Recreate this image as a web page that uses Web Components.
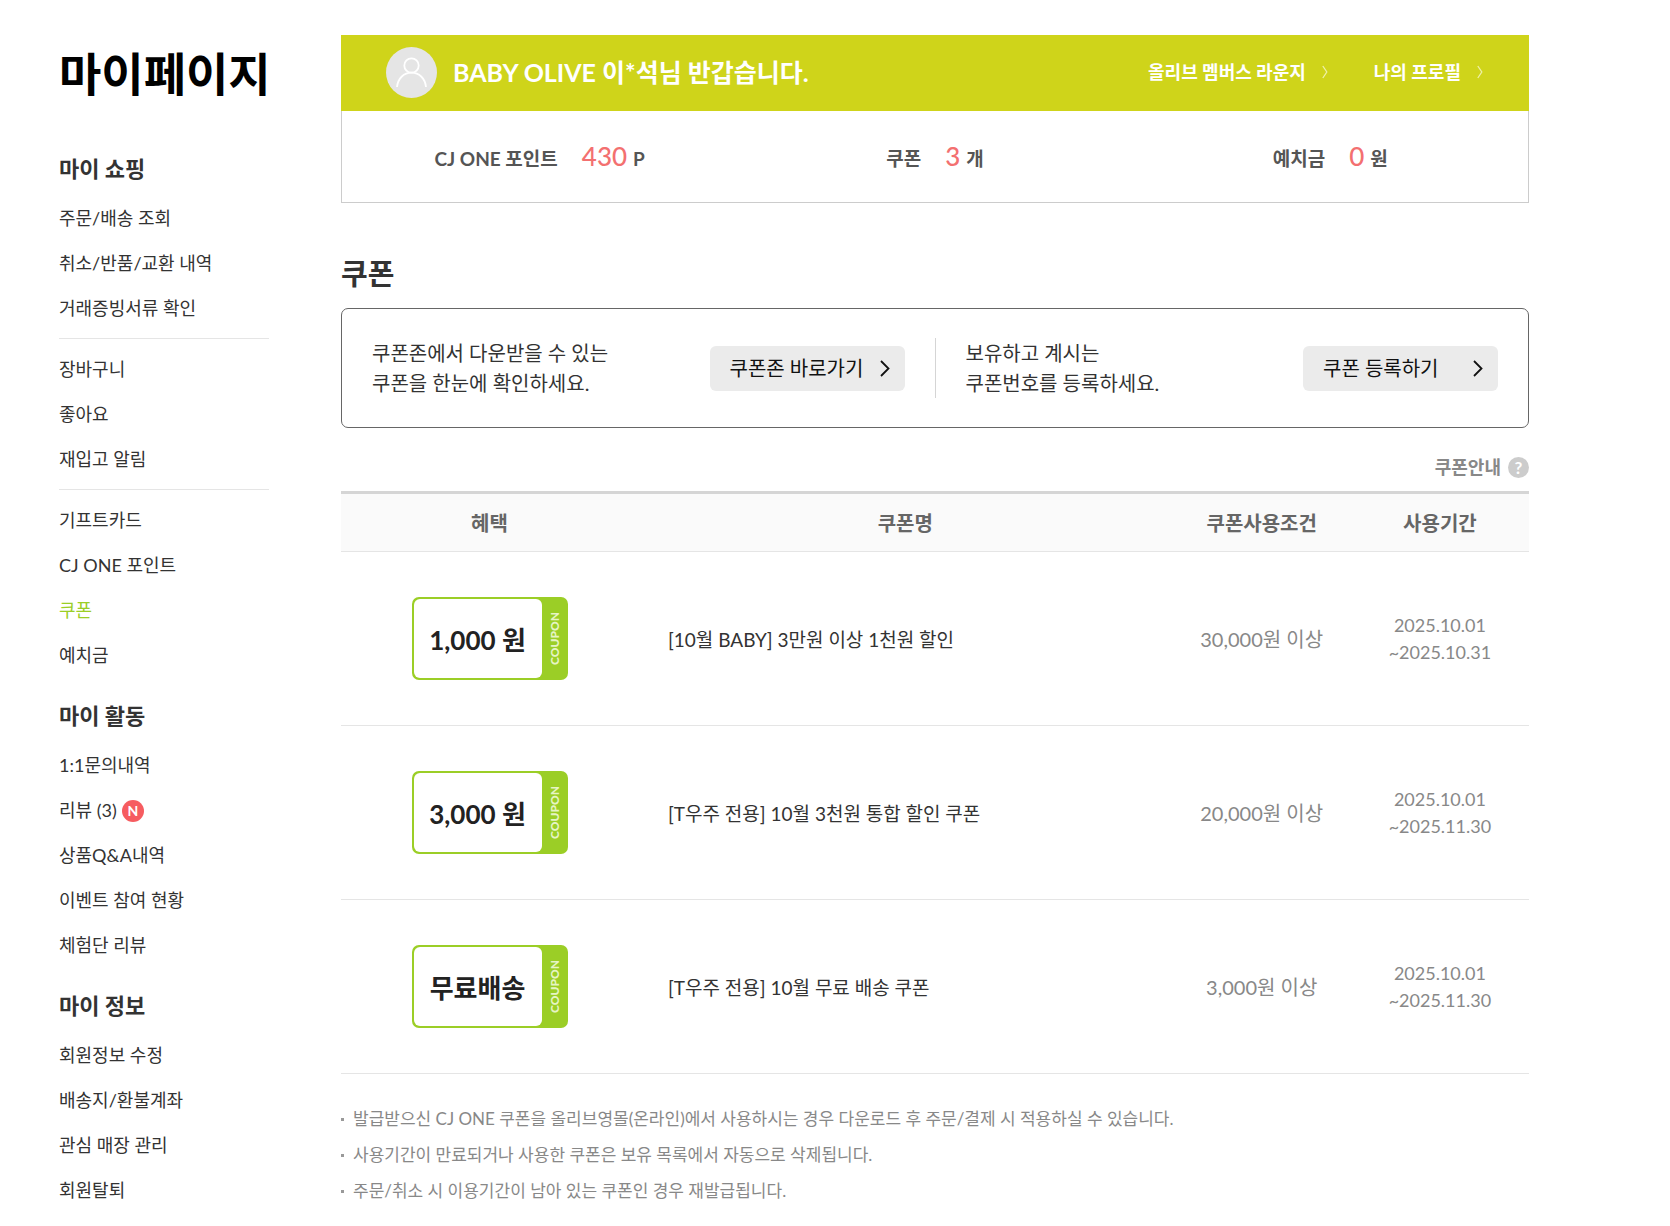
<!DOCTYPE html>
<html lang="ko">
<head>
<meta charset="utf-8">
<title>마이페이지 - 쿠폰</title>
<style>
  body {
    margin: 0;
    background: #fff;
    color: #333;
    font-family: Lato, "Noto Sans CJK KR", sans-serif;
    font-size: 18px;
  }
</style>
</head>
<body>
<my-page>
  <my-menu slot="menu">
    <menu-group heading="마이 쇼핑">
      <menu-list>
        <menu-item>주문/배송 조회</menu-item>
        <menu-item>취소/반품/교환 내역</menu-item>
        <menu-item>거래증빙서류 확인</menu-item>
      </menu-list>
      <menu-list>
        <menu-item>장바구니</menu-item>
        <menu-item>좋아요</menu-item>
        <menu-item>재입고 알림</menu-item>
      </menu-list>
      <menu-list>
        <menu-item>기프트카드</menu-item>
        <menu-item>CJ ONE 포인트</menu-item>
        <menu-item active>쿠폰</menu-item>
        <menu-item>예치금</menu-item>
      </menu-list>
    </menu-group>
    <menu-group heading="마이 활동">
      <menu-list>
        <menu-item>1:1문의내역</menu-item>
        <menu-item badge="N">리뷰 (3)</menu-item>
        <menu-item>상품Q&amp;A내역</menu-item>
        <menu-item>이벤트 참여 현황</menu-item>
        <menu-item>체험단 리뷰</menu-item>
      </menu-list>
    </menu-group>
    <menu-group heading="마이 정보">
      <menu-list>
        <menu-item>회원정보 수정</menu-item>
        <menu-item>배송지/환불계좌</menu-item>
        <menu-item>관심 매장 관리</menu-item>
        <menu-item>회원탈퇴</menu-item>
      </menu-list>
    </menu-group>
  </my-menu>

  <member-banner>
    BABY OLIVE 이*석님 반갑습니다.
    <member-point slot="points" label="CJ ONE 포인트" value="430" unit="P"></member-point>
    <member-point slot="points" label="쿠폰" value="3" unit="개"></member-point>
    <member-point slot="points" label="예치금" value="0" unit="원"></member-point>
  </member-banner>

  <coupon-section heading="쿠폰">
    <coupon-guide slot="guide" button="쿠폰존 바로가기">쿠폰존에서 다운받을 수 있는<br>쿠폰을 한눈에 확인하세요.</coupon-guide>
    <coupon-guide slot="guide" button="쿠폰 등록하기">보유하고 계시는<br>쿠폰번호를 등록하세요.</coupon-guide>
    <coupon-table></coupon-table>
    <notice-list></notice-list>
  </coupon-section>
</my-page>

<script>
// small helper: every element clones its own template into an open shadow root
function define(name, html, setup) {
  const template = document.createElement('template');
  template.innerHTML = html;

  window.customElements.define(name, class extends HTMLElement {
    constructor() {
      super();
      this.attachShadow({ mode: 'open' }).appendChild(template.content.cloneNode(true));
    }

    connectedCallback() {
      if (setup) setup(this, this.shadowRoot);
    }
  });
}

define('my-page', `
  <style>
    :host {
      display: flex;
      align-items: flex-start;
      gap: 72px;
      padding: 0 141px 0 59px;
    }
    aside { flex: 0 0 210px; min-width: 0; padding-top: 44px; }
    main { flex: 1; min-width: 0; padding-top: 35px; }
    h1 {
      margin: 0 0 37px;
      color: #000;
      font-size: 46px;
      line-height: 60px;
      white-space: nowrap;
    }
  </style>
  <aside>
    <h1>마이페이지</h1>
    <slot name="menu"></slot>
  </aside>
  <main><slot></slot></main>
`);

define('my-menu', `
  <style>
    :host { display: block; }
    nav { display: flex; flex-direction: column; gap: 10px; }
  </style>
  <nav aria-label="마이페이지"><slot></slot></nav>
`);

define('menu-group', `
  <style>
    :host { display: block; }
    h2 { margin: 0; font-size: 22px; line-height: 55px; }
  </style>
  <h2></h2>
  <slot></slot>
`, (el, root) => {
  root.querySelector('h2').textContent = el.getAttribute('heading');
});

define('menu-list', `
  <style>
    :host { display: block; }
    :host(:not(:last-of-type)) {
      padding-bottom: 7px;
      margin-bottom: 8px;
      border-bottom: 1px solid #e5e5e5;
    }
  </style>
  <slot></slot>
`);

define('menu-item', `
  <style>
    :host { display: flex; align-items: center; gap: 5px; height: 45px; }
    a { color: inherit; text-decoration: none; line-height: 45px; white-space: nowrap; }
    :host([active]) { color: #9bce26; }
    .badge {
      width: 22px;
      border-radius: 50%;
      background: #f65c60;
      color: #fff;
      font-size: 14px;
      font-weight: 700;
      line-height: 22px;
      text-align: center;
    }
  </style>
  <a href="#"><slot></slot></a>
`, (el, root) => {
  if (el.hasAttribute('badge')) {
    const badge = document.createElement('span');
    badge.className = 'badge';
    badge.textContent = el.getAttribute('badge');
    root.appendChild(badge);
  }
});

define('member-banner', `
  <style>
    :host { display: block; }
    .top {
      display: flex;
      align-items: center;
      height: 74px;
      padding: 0 46px 2px 45px;
      background: #cfd41a;
      color: #fff;
    }
    .avatar { width: 51px; height: 51px; margin-right: 16px; }
    p { flex: 1; margin: 0; font-size: 25px; font-weight: 700; line-height: 36px; }
    .links { display: flex; gap: 46px; }
    a {
      display: flex;
      align-items: center;
      gap: 16px;
      color: inherit;
      font-weight: 700;
      line-height: 30px;
      text-decoration: none;
    }
    .points {
      display: grid;
      grid-template-columns: repeat(3, 1fr);
      height: 91px;
      border: 1px solid #ccc;
      border-top: 0;
    }
  </style>
  <div class="top">
    <svg class="avatar" viewBox="0 0 51 51" fill="none">
      <circle cx="25.5" cy="25.5" r="25.5" fill="#e5e5e5"/>
      <circle cx="25.5" cy="18.5" r="7.2" stroke="#fff" stroke-width="1.8"/>
      <path d="M11 40c1-9 7-14.300 14.500-14.300S39 31 40 40" stroke="#fff" stroke-width="1.800"/>
    </svg>
    <p><slot></slot></p>
    <div class="links">
      <a href="#">올리브 멤버스 라운지
        <svg width="6" height="14" viewBox="0 0 6 14" fill="none" stroke="#eef0a8" stroke-width="1.3"><path d="M.8 1l4 6-4 6"/></svg>
      </a>
      <a href="#">나의 프로필
        <svg width="6" height="14" viewBox="0 0 6 14" fill="none" stroke="#eef0a8" stroke-width="1.3"><path d="M.8 1l4 6-4 6"/></svg>
      </a>
    </div>
  </div>
  <div class="points"><slot name="points"></slot></div>
`);

define('member-point', `
  <style>
    :host {
      display: flex;
      align-items: baseline;
      justify-content: center;
      padding-top: 25px;
      color: #555;
      font-size: 19px;
      font-weight: 700;
      line-height: 40px;
    }
    .value {
      margin: 0 6px 0 24px;
      color: #f37070;
      font-size: 26px;
      font-weight: 500;
    }
  </style>
  <span class="label"></span><span class="value"></span><span class="unit"></span>
`, (el, root) => {
  ['label', 'value', 'unit'].forEach((key) => {
    root.querySelector('.' + key).textContent = el.getAttribute(key);
  });
});

define('coupon-section', `
  <style>
    :host { display: block; padding-top: 49px; }
    h2 { margin: 0 0 12px; font-size: 29px; line-height: 44px; }
    .guides {
      display: grid;
      grid-template-columns: 1fr 1px 1fr;
      align-items: center;
      height: 118px;
      border: 1px solid #666;
      border-radius: 7px;
    }
    .line { grid-area: 1 / 2; height: 60px; background: #d5d5d5; }
    .help {
      display: flex;
      align-items: center;
      justify-content: flex-end;
      gap: 7px;
      width: fit-content;
      margin: 24px 0 9px auto;
      color: #888;
      font-weight: 700;
      line-height: 30px;
      text-decoration: none;
    }
    .mark {
      width: 21px;
      border-radius: 50%;
      background: #ccc;
      color: #fff;
      font-size: 17px;
      line-height: 21px;
      text-align: center;
    }
  </style>
  <h2></h2>
  <div class="guides">
    <slot name="guide"></slot>
    <span class="line"></span>
  </div>
  <a class="help" href="#">쿠폰안내 <span class="mark">?</span></a>
  <slot></slot>
`, (el, root) => {
  root.querySelector('h2').textContent = el.getAttribute('heading');
});

define('coupon-guide', `
  <style>
    :host {
      display: flex;
      align-items: center;
      justify-content: space-between;
      padding: 0 30px;
      font-size: 20px;
      line-height: 30px;
    }
    button {
      display: flex;
      align-items: center;
      justify-content: space-between;
      width: 195px;
      height: 45px;
      padding: 0 15px 0 20px;
      border: 0;
      border-radius: 6px;
      background: #ebebeb;
      color: #111;
      font: inherit;
    }
  </style>
  <span><slot></slot></span>
  <button type="button">
    <span class="text"></span>
    <svg width="10" height="17" viewBox="0 0 10 17" fill="none" stroke="#111" stroke-width="1.8"><path d="M1 1l7.500 7.500L1 16"/></svg>
  </button>
`, (el, root) => {
  root.querySelector('.text').textContent = el.getAttribute('button');
});

// coupon drawn as a ticket, green stub on the right
define('coupon-ticket', `
  <style>
    :host {
      display: inline-flex;
      box-sizing: border-box;
      width: 156px;
      height: 83px;
      padding: 2px 0 2px 2px;
      border-radius: 7px;
      background: #9bce26;
      vertical-align: middle;
    }
    .amount {
      display: flex;
      flex: 1;
      align-items: center;
      justify-content: center;
      border-radius: 6px;
      background: #fff;
      color: #222;
      font-size: 26px;
      font-weight: 700;
      white-space: nowrap;
    }
    .stub {
      width: 26px;
      color: #e6f4c4;
      font-size: 12px;
      font-weight: 900;
      line-height: 26px;
      text-align: center;
      writing-mode: vertical-rl;
      transform: rotate(180deg);
    }
  </style>
  <span class="amount"><slot></slot></span>
  <span class="stub">COUPON</span>
`);

const coupons = [
  { benefit: '1,000 원', name: '[10월 BABY] 3만원 이상 1천원 할인', condition: '30,000원 이상', from: '2025.10.01', to: '~2025.10.31' },
  { benefit: '3,000 원', name: '[T우주 전용] 10월 3천원 통합 할인 쿠폰', condition: '20,000원 이상', from: '2025.10.01', to: '~2025.11.30' },
  { benefit: '무료배송', name: '[T우주 전용] 10월 무료 배송 쿠폰', condition: '3,000원 이상', from: '2025.10.01', to: '~2025.11.30' }
];

define('coupon-table', `
  <style>
    :host { display: block; }
    table {
      width: 100%;
      border-top: 3px solid #d5d5d5;
      border-spacing: 0;
      table-layout: fixed;
      font-size: 20px;
    }
    th, td { padding: 0; border-bottom: 1px solid #e5e5e5; text-align: center; }
    th { height: 57px; background: #fafafa; color: #666; }
    td { height: 173px; color: #888; }
    td.name { padding-left: 30px; color: #333; font-size: 19px; text-align: left; }
    td.period { font-size: 18px; line-height: 27px; }
    .w25 { width: 25%; }
    .w45 { width: 45%; }
    .w15 { width: 15%; }
  </style>
  <table>
    <colgroup><col class="w25"><col class="w45"><col class="w15"><col class="w15"></colgroup>
    <thead>
      <tr><th scope="col">혜택</th><th scope="col">쿠폰명</th><th scope="col">쿠폰사용조건</th><th scope="col">사용기간</th></tr>
    </thead>
    <tbody></tbody>
  </table>
`, (el, root) => {
  root.querySelector('tbody').innerHTML = coupons.map((c) => `
    <tr>
      <td><coupon-ticket>${c.benefit}</coupon-ticket></td>
      <td class="name">${c.name}</td>
      <td>${c.condition}</td>
      <td class="period">${c.from}<br>${c.to}</td>
    </tr>`).join('');
});

define('notice-list', `
  <style>
    :host { display: block; padding-top: 27px; }
    ul { margin: 0; padding: 0; list-style: none; color: #888; font-size: 17px; line-height: 36px; }
    li { display: flex; align-items: center; gap: 9px; }
    li::before { content: ""; width: 3px; height: 3px; background: #999; }
  </style>
  <ul>
    <li>발급받으신 CJ ONE 쿠폰을 올리브영몰(온라인)에서 사용하시는 경우 다운로드 후 주문/결제 시 적용하실 수 있습니다.</li>
    <li>사용기간이 만료되거나 사용한 쿠폰은 보유 목록에서 자동으로 삭제됩니다.</li>
    <li>주문/취소 시 이용기간이 남아 있는 쿠폰인 경우 재발급됩니다.</li>
  </ul>
`);
</script>
</body>
</html>
